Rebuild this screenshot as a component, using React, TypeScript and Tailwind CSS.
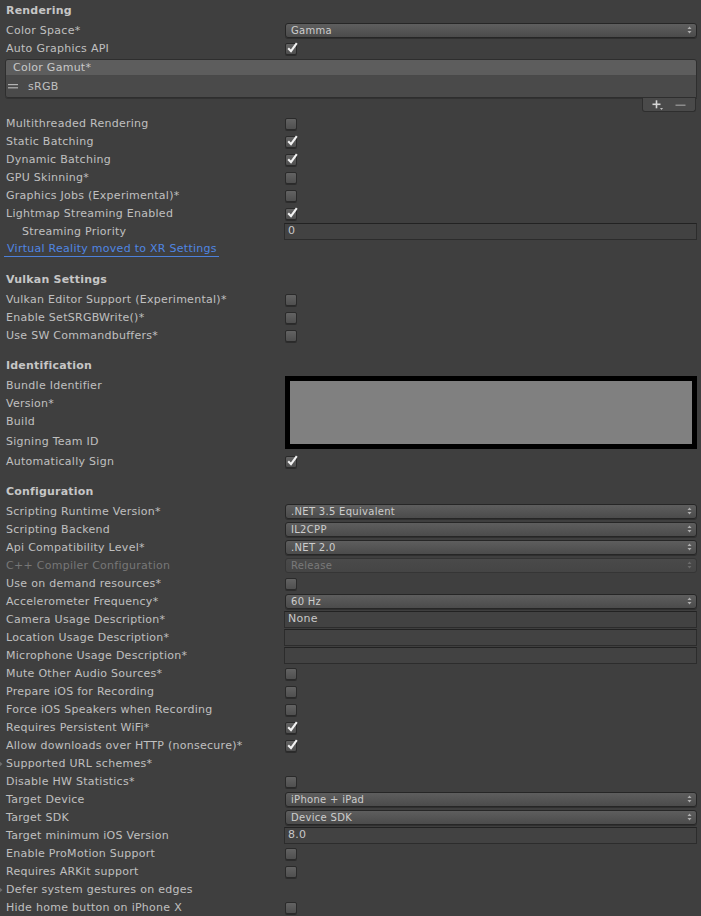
import React from 'react';

type Control =
  | { kind: 'check'; on?: boolean }
  | { kind: 'popup'; value: string; disabled?: boolean }
  | { kind: 'field'; value?: string }
  | { kind: 'none' };

type RowDef = {
  label: string;
  control: Control;
  disabled?: boolean;
  foldout?: boolean;
  indent?: boolean;
};

const Check: React.FC<{ on?: boolean }> = ({ on }) => (
  <div className="relative mt-[1px] h-[12px] w-[12px] rounded-[2px] border border-[#2a2a2a] bg-gradient-to-b from-[#636363] to-[#4f4f4f] shadow-[0_1px_0_rgba(0,0,0,0.3)]">
    {on && (
      <svg className="absolute -top-[3px] left-[0px]" width="13" height="13" viewBox="0 0 13 13">
        <path d="M2.2 7.2 L5 10.2 L10.8 2.2" stroke="#f2f2f2" strokeWidth="2.1" fill="none" strokeLinejoin="miter" />
      </svg>
    )}
  </div>
);

const Arrows: React.FC<{ dim?: boolean }> = ({ dim }) => (
  <svg width="5" height="8" viewBox="0 0 5 8">
    <path d="M2.5 0.5 L4.5 3 L0.5 3 Z" fill={dim ? '#6a6a6a' : '#b0b0b0'} />
    <path d="M2.5 7.5 L4.5 5 L0.5 5 Z" fill={dim ? '#6a6a6a' : '#b0b0b0'} />
  </svg>
);

const Popup: React.FC<{ value: string; disabled?: boolean }> = ({ value, disabled }) => (
  <div
    className={`mr-[4px] flex h-[15px] flex-1 items-center justify-between rounded-[3px] border pl-[5px] pr-[4px] text-[10px] tracking-[0.3px] ${
      disabled
        ? 'border-[#353535] bg-gradient-to-b from-[#4a4a4a] to-[#454545] text-[#7a7a7a]'
        : 'border-[#262626] bg-gradient-to-b from-[#5e5e5e] to-[#4b4b4b] text-[#cdcdcd] shadow-[0_1px_0_rgba(0,0,0,0.25)]'
    }`}
  >
    <span className="pt-[1px] leading-none">{value}</span>
    <Arrows dim={disabled} />
  </div>
);

const Field: React.FC<{ value?: string }> = ({ value }) => (
  <div className="mr-[4px] -ml-[1px] flex h-[17px] flex-1 items-center border border-[#2c2c2c] border-t-[#222222] bg-[#424242] pl-[3px] pt-[1px] text-[#c8c8c8]">
    {value}
  </div>
);

const Foldout = () => (
  <svg className="absolute -left-[1px] top-[7px]" width="4" height="6" viewBox="0 0 4 6">
    <path d="M0 0 L3.5 3 L0 6 Z" fill="#6e6e6e" />
  </svg>
);

const Row: React.FC<RowDef> = ({ label, control, disabled, foldout, indent }) => (
  <div className="relative flex h-[18px] items-center">
    {foldout && <Foldout />}
    <div
      className={`w-[285px] shrink-0 whitespace-nowrap pt-[2px] ${indent ? 'pl-[22px]' : 'pl-[6px]'} ${
        disabled ? 'text-[#777777]' : ''
      }`}
    >
      {label}
    </div>
    {control.kind === 'check' && <Check on={control.on} />}
    {control.kind === 'popup' && <Popup value={control.value} disabled={control.disabled} />}
    {control.kind === 'field' && <Field value={control.value} />}
  </div>
);

const Header: React.FC<{ title: string; first?: boolean }> = ({ title, first }) => (
  <div className={`flex h-[18px] items-center pl-[6px] pt-[2px] font-bold tracking-[0.2px] text-[#c6c6c6] ${first ? '' : 'mt-[12px]'}`}>
    {title}
  </div>
);

const rendering1: RowDef[] = [
  { label: 'Color Space*', control: { kind: 'popup', value: 'Gamma' } },
  { label: 'Auto Graphics API', control: { kind: 'check', on: true } },
];

const rendering2: RowDef[] = [
  { label: 'Multithreaded Rendering', control: { kind: 'check' } },
  { label: 'Static Batching', control: { kind: 'check', on: true } },
  { label: 'Dynamic Batching', control: { kind: 'check', on: true } },
  { label: 'GPU Skinning*', control: { kind: 'check' } },
  { label: 'Graphics Jobs (Experimental)*', control: { kind: 'check' } },
  { label: 'Lightmap Streaming Enabled', control: { kind: 'check', on: true } },
  { label: 'Streaming Priority', control: { kind: 'field', value: '0' }, indent: true },
];

const vulkan: RowDef[] = [
  { label: 'Vulkan Editor Support (Experimental)*', control: { kind: 'check' } },
  { label: 'Enable SetSRGBWrite()*', control: { kind: 'check' } },
  { label: 'Use SW Commandbuffers*', control: { kind: 'check' } },
];

const configuration: RowDef[] = [
  { label: 'Scripting Runtime Version*', control: { kind: 'popup', value: '.NET 3.5 Equivalent' } },
  { label: 'Scripting Backend', control: { kind: 'popup', value: 'IL2CPP' } },
  { label: 'Api Compatibility Level*', control: { kind: 'popup', value: '.NET 2.0' } },
  { label: 'C++ Compiler Configuration', control: { kind: 'popup', value: 'Release', disabled: true }, disabled: true },
  { label: 'Use on demand resources*', control: { kind: 'check' } },
  { label: 'Accelerometer Frequency*', control: { kind: 'popup', value: '60 Hz' } },
  { label: 'Camera Usage Description*', control: { kind: 'field', value: 'None' } },
  { label: 'Location Usage Description*', control: { kind: 'field' } },
  { label: 'Microphone Usage Description*', control: { kind: 'field' } },
  { label: 'Mute Other Audio Sources*', control: { kind: 'check' } },
  { label: 'Prepare iOS for Recording', control: { kind: 'check' } },
  { label: 'Force iOS Speakers when Recording', control: { kind: 'check' } },
  { label: 'Requires Persistent WiFi*', control: { kind: 'check', on: true } },
  { label: 'Allow downloads over HTTP (nonsecure)*', control: { kind: 'check', on: true } },
  { label: 'Supported URL schemes*', control: { kind: 'none' }, foldout: true },
  { label: 'Disable HW Statistics*', control: { kind: 'check' } },
  { label: 'Target Device', control: { kind: 'popup', value: 'iPhone + iPad' } },
  { label: 'Target SDK', control: { kind: 'popup', value: 'Device SDK' } },
  { label: 'Target minimum iOS Version', control: { kind: 'field', value: '8.0' } },
  { label: 'Enable ProMotion Support', control: { kind: 'check' } },
  { label: 'Requires ARKit support', control: { kind: 'check' } },
  { label: 'Defer system gestures on edges', control: { kind: 'none' }, foldout: true },
  { label: 'Hide home button on iPhone X', control: { kind: 'check' } },
];

const ColorGamutList = () => (
  <div className="mt-[2px] ml-[5px] mr-[4px]">
    <div className="overflow-hidden rounded-t-[3px] rounded-bl-[3px] border border-[#2e2e2e] shadow-[0_1px_0_rgba(0,0,0,0.2)]">
      <div className="flex h-[16px] items-center border-b border-[#494949] bg-[#5d5d5d] pl-[7px] pt-[2px] text-[#c8c8c8]">Color Gamut*</div>
      <div className="flex h-[21px] items-center bg-[#4a4a4a]">
        <svg className="ml-[2px]" width="10" height="5" viewBox="0 0 10 5">
          <rect x="0" y="0" width="10" height="1.2" fill="#b4b4b4" />
          <rect x="0" y="3.2" width="10" height="1.2" fill="#b4b4b4" />
        </svg>
        <span className="ml-[10px] pt-[2px]">sRGB</span>
      </div>
    </div>
    <div className="flex justify-end pr-[1px]">
      <div className="flex h-[14px] w-[54px] items-center justify-around rounded-b-[3px] border border-t-0 border-[#2e2e2e] bg-[#4a4a4a] px-[4px]">
        <svg width="12" height="10" viewBox="0 0 12 10">
          <rect x="0.5" y="3.5" width="8" height="1.6" fill="#d6d6d6" />
          <rect x="3.7" y="0.3" width="1.6" height="8" fill="#d6d6d6" />
          <path d="M8 8 L11 8 L9.5 10 Z" fill="#c0c0c0" />
        </svg>
        <svg width="11" height="6" viewBox="0 0 11 6">
          <rect x="0.5" y="2.5" width="10" height="1.5" fill="#8c8c8c" />
        </svg>
      </div>
    </div>
  </div>
);

export default function App() {
  return (
    <div className="h-[916px] w-[701px] overflow-hidden bg-[#3f3f3f] pt-[1px] font-['DejaVu_Sans',sans-serif] text-[11px] tracking-[0.27px] text-[#c0c0c0]">
      <Header title="Rendering" first />
      <div className="mt-[2px]">
        {rendering1.map(r => (
          <Row key={r.label} {...r} />
        ))}
      </div>
      <ColorGamutList />
      <div className="mt-[2px]">
        {rendering2.map(r => (
          <Row key={r.label} {...r} />
        ))}
        <div className="flex h-[18px] items-start">
          <span className="ml-[4px] border-b border-[#4d80d9] pl-[3px] pr-[2px] pt-[1px] leading-[15px] text-[#4f86e3]">
            Virtual Reality moved to XR Settings
          </span>
        </div>
      </div>

      <Header title="Vulkan Settings" />
      <div className="mt-[2px]">
        {vulkan.map(r => (
          <Row key={r.label} {...r} />
        ))}
      </div>

      <Header title="Identification" />
      <div className="mt-[2px] flex">
        <div className="w-[285px] shrink-0 pl-[6px]">
          <div className="flex h-[18px] items-center pt-[2px]">Bundle Identifier</div>
          <div className="flex h-[18px] items-center pt-[2px]">Version*</div>
          <div className="flex h-[18px] items-center pt-[2px]">Build</div>
          <div className="mt-[2px] flex h-[18px] items-center pt-[2px]">Signing Team ID</div>
        </div>
        <div className="mr-[4px] h-[73px] flex-1 border-[5px] border-black bg-[#808080]" />
      </div>
      <div className="mt-[2px]">
        <Row label="Automatically Sign" control={{ kind: 'check', on: true }} />
      </div>

      <Header title="Configuration" />
      <div className="mt-[2px]">
        {configuration.map(r => (
          <Row key={r.label} {...r} />
        ))}
      </div>
    </div>
  );
}
